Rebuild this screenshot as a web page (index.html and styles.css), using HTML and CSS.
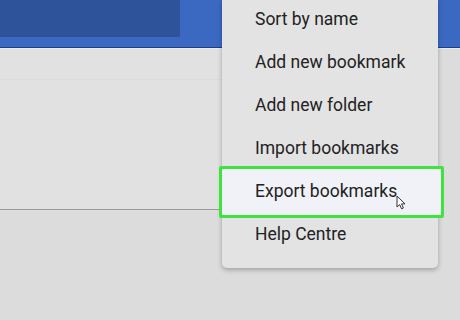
FILE: index.html
```html
<!DOCTYPE html>
<html lang="en">
<head>
  <meta charset="UTF-8">
  <title>Bookmarks menu</title>
  <link rel="stylesheet" href="styles.css">
</head>
<body>
  <div class="screen">
    <div class="topbar">
      <div class="topbar-inner"></div>
    </div>
    <div class="panel">
      <div class="panel-row"></div>
    </div>

    <ul class="menu">
      <li class="menu-item">Sort by name</li>
      <li class="menu-item">Add new bookmark</li>
      <li class="menu-item">Add new folder</li>
      <li class="menu-item">Import bookmarks</li>
      <li class="menu-item active">Export bookmarks</li>
      <li class="menu-item">Help Centre</li>
    </ul>

    <svg class="cursor" width="11" height="15" viewBox="0 0 11 15">
      <path d="M1 1 L1 12 L3.6 9.6 L5.6 13.8 L7.4 13 L5.5 8.9 L9 8.9 Z" fill="#fff" stroke="#333" stroke-width="1" stroke-linejoin="round"/>
    </svg>
  </div>
</body>
</html>
```

FILE: styles.css
```css
body {
  margin: 0;
  font-family: 'Roboto', 'Liberation Sans', sans-serif;
  background-color: #dcdcdc;
}

.screen {
  position: relative;
  width: 460px;
  height: 320px;
  overflow: hidden;
  background-color: #dcdcdc;
}

.topbar {
  height: 47px;
  background-color: #3b69c2;
  border-bottom: 1px solid #1f3f8c;
  box-shadow: 0 1px 0 #efe9e0;
}

.topbar-inner {
  width: 180px;
  height: 37px;
  background-color: #2e539b;
}

.panel {
  width: 230px;
  height: 160px;
  margin-top: 1px;
  background-color: #e1e1e1;
  border-bottom: 1px solid #9c9c96;
}

.panel-row {
  height: 30px;
  border-bottom: 1px solid #dbdbdb;
}

.menu {
  position: absolute;
  left: 222px;
  top: -2px;
  width: 216px;
  margin: 0;
  padding: 0 0 12px 0;
  list-style: none;
  background-color: #e3e3e3;
  border-radius: 0 0 5px 5px;
  box-shadow: 0 2px 5px rgba(0, 0, 0, 0.28);
}

.menu-item {
  position: relative;
  z-index: 0;
  height: 43px;
  line-height: 43px;
  padding-left: 33px;
  font-size: 17.5px;
  color: #222;
}

.menu-item.active::before {
  content: "";
  position: absolute;
  z-index: -1;
  left: -3px;
  right: -6px;
  top: -4px;
  bottom: -5px;
  background-color: #f1f2f7;
  border: 3px solid #3fe33f;
  border-radius: 2px;
}

.cursor {
  position: absolute;
  left: 396px;
  top: 195px;
}
```
